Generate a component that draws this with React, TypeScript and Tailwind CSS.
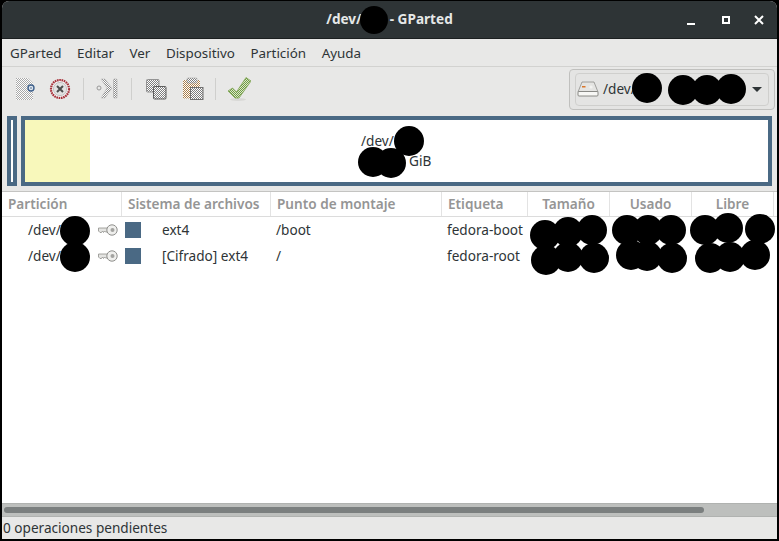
const blobs = [
  [374, 20, 14],
  [647, 88, 15],
  [683, 90, 15],
  [707, 90, 15],
  [731, 89, 15],
  [409, 141, 15],
  [373, 162, 15],
  [391, 163, 15],
  [75, 231, 15],
  [75, 257, 15],
  [545, 235, 15],
  [568, 232, 15],
  [592, 230, 15],
  [546, 260, 15],
  [568, 257, 15],
  [594, 258, 15],
  [627, 230, 15],
  [648, 230, 15],
  [671, 230, 15],
  [631, 255, 15],
  [647, 256, 15],
  [672, 258, 15],
  [705, 230, 15],
  [728, 228, 15],
  [760, 229, 15],
  [710, 258, 15],
  [730, 257, 15],
  [755, 255, 15],
];

const columns = "grid grid-cols-[120px_149px_171px_86px_82px_82px_82px_1fr]";

function Checker({ id, color, base = "#fff" }: { id: string; color: string; base?: string }) {
  return (
    <pattern id={id} width="2" height="2" patternUnits="userSpaceOnUse">
      <rect width="2" height="2" fill={base} />
      <rect width="1" height="1" fill={color} />
      <rect x="1" y="1" width="1" height="1" fill={color} />
    </pattern>
  );
}

function NewIcon() {
  return (
    <svg width="24" height="24" viewBox="0 0 24 24">
      <defs>
        <Checker id="chk-new" color="#a8a8a8" />
      </defs>
      <path d="M3 1H15L20 6V23H3Z" fill="url(#chk-new)" />
      <circle cx="18" cy="11" r="3" fill="#dfe6ee" stroke="#3f618c" strokeWidth="1.4" />
      <circle cx="18" cy="11" r="0.8" fill="#3f618c" />
    </svg>
  );
}

function CancelIcon() {
  return (
    <svg width="24" height="24" viewBox="0 0 24 24">
      <circle cx="12" cy="12" r="9" fill="#f3f3f3" stroke="#a62f38" strokeWidth="2.2" strokeDasharray="1.6 0.7" />
      <circle cx="12" cy="12" r="6.6" fill="#e2e2e2" stroke="#c4c4c4" />
      <path d="M9 9L15 15M15 9L9 15" stroke="#4d4d4d" strokeWidth="2" />
    </svg>
  );
}

function ApplyAllIcon() {
  return (
    <svg width="24" height="24" viewBox="0 0 24 24">
      <defs>
        <Checker id="chk-next" color="#8c8c8c" />
      </defs>
      <circle cx="3" cy="11" r="2" fill="none" stroke="#999" />
      <path d="M5 2H9L16 11L9 21H5L11 11Z" fill="url(#chk-next)" stroke="#bdbdbd" strokeWidth="0.6" />
      <rect x="17.5" y="2" width="3.5" height="19" rx="1" fill="url(#chk-next)" stroke="#aaa" strokeWidth="0.6" />
    </svg>
  );
}

function CopyIcon() {
  return (
    <svg width="24" height="24" viewBox="0 0 24 24">
      <defs>
        <Checker id="chk-copy" color="#7e7e7e" />
      </defs>
      <rect x="2.5" y="2.5" width="12.5" height="12.5" rx="1" fill="url(#chk-copy)" stroke="#949494" />
      <rect x="9.5" y="9.5" width="12.5" height="12.5" rx="1" fill="url(#chk-copy)" stroke="#5e5e5e" />
    </svg>
  );
}

function PasteIcon() {
  return (
    <svg width="24" height="24" viewBox="0 0 24 24">
      <defs>
        <Checker id="chk-board" color="#ab7f4b" />
        <Checker id="chk-sheet" color="#7e7e7e" />
      </defs>
      <rect x="2" y="3" width="17" height="18.5" rx="1" fill="url(#chk-board)" />
      <rect x="6" y="1" width="10" height="5" rx="1" fill="url(#chk-sheet)" stroke="#a5a5a5" strokeWidth="0.6" />
      <rect x="9.5" y="10.5" width="12.5" height="12" fill="url(#chk-sheet)" stroke="#707070" />
    </svg>
  );
}

function CheckIcon() {
  return (
    <svg width="24" height="24" viewBox="0 0 24 24">
      <defs>
        <Checker id="chk-ok" color="#6f9a45" base="#dbe8c8" />
      </defs>
      <ellipse cx="11" cy="22.5" rx="8" ry="1.4" fill="#d8d8d6" />
      <path d="M1 14L5.5 11L9.5 15L19 0.5L24 4L12 21H8Z" fill="url(#chk-ok)" stroke="#7da352" strokeWidth="0.8" />
    </svg>
  );
}

function KeyIcon() {
  return (
    <svg width="20" height="14" viewBox="0 0 20 14">
      <path d="M0.5 5H10V9H7.5L6.5 8L5.5 9.5L4.5 8L3.5 9.5H2L0.5 8Z" fill="#e4e4e2" stroke="#8f8f8c" strokeWidth="0.8" />
      <circle cx="14" cy="7" r="5.2" fill="#efefed" stroke="#8f8f8c" />
      <circle cx="14.5" cy="7" r="2" fill="#a3a3a0" />
    </svg>
  );
}

function DiskIcon() {
  return (
    <svg width="22" height="16" viewBox="0 0 22 16">
      <path d="M5 1H17L21 11H1Z" fill="#e4e4e2" stroke="#8d8d8a" strokeWidth="0.8" />
      <rect x="1" y="10.5" width="20" height="4.5" rx="1" fill="#f7f7f5" stroke="#7f7f7c" strokeWidth="0.9" />
      <rect x="5" y="5" width="3.5" height="1.5" fill="#d9762b" />
      <circle cx="14" cy="6" r="1.6" fill="#f3f3f1" />
    </svg>
  );
}

function Separator() {
  return <div className="ml-[11px] mr-[12px] h-[22px] w-px bg-[#cfcfcd]" />;
}

function HeaderCell({ label, center }: { label: string; center?: boolean }) {
  return (
    <div
      className={`flex items-center border-r border-[#e3e3e3] px-[6px] text-[13.6px] font-semibold text-[#959595] ${center ? "justify-center" : ""}`}
    >
      {label}
    </div>
  );
}

function Row({ fs, mount, label }: { fs: string; mount: string; label: string }) {
  return (
    <div className={`${columns} h-[26px] items-center text-[13.6px] text-[#2e3436]`}>
      <div className="flex items-center pl-[26px]">
        <span className="w-[70px]">/dev/</span>
        <KeyIcon />
      </div>
      <div className="flex items-center pl-[3px]">
        <div className="h-4 w-4 bg-[#4a6984]" />
        <span className="ml-[21px]">{fs}</span>
      </div>
      <div className="pl-[5px]">{mount}</div>
      <div className="pl-[5px]">{label}</div>
    </div>
  );
}

export default function App() {
  return (
    <div className="relative h-[541px] w-[779px] overflow-hidden bg-black font-['Noto_Sans',sans-serif]">
      <div className="mx-[2px] mt-px flex h-[538px] flex-col overflow-hidden rounded-t-[7px] bg-[#e8e8e7]">
        <div className="relative flex h-[38px] shrink-0 items-center justify-center border-b border-[#1c2021] bg-[#2e3436] text-[13.6px] font-bold text-[#e6e8e8]">
          <span>/dev/</span>
          <span className="w-[28px]" />
          <span>- GParted</span>
          <div className="absolute right-[1px] top-0 flex h-full items-center">
            <div className="mr-[27px] mt-[8px] h-[2px] w-[8px] bg-white" />
            <div className="mr-[24px] h-[8px] w-[8px] border-2 border-white" />
            <svg width="10" height="10" viewBox="0 0 10 10" className="mr-[12px]">
              <path d="M1 1L9 9M9 1L1 9" stroke="#fff" strokeWidth="2" />
            </svg>
          </div>
        </div>

        <div className="flex h-[28px] shrink-0 items-center gap-[15.5px] border-b border-[#d2d2d0] pl-2 pt-px text-[13.4px] text-[#2e3436]">
          <span>GParted</span>
          <span>Editar</span>
          <span>Ver</span>
          <span>Dispositivo</span>
          <span>Partición</span>
          <span>Ayuda</span>
        </div>

        <div className="flex h-[44px] shrink-0 items-center pl-[11px] pr-[2px]">
          <NewIcon />
          <div className="ml-[11px]">
            <CancelIcon />
          </div>
          <Separator />
          <ApplyAllIcon />
          <Separator />
          <CopyIcon />
          <div className="ml-[13px]">
            <PasteIcon />
          </div>
          <div className="ml-[10px] mr-[11px] h-[22px] w-px bg-[#cfcfcd]" />
          <CheckIcon />
          <div className="ml-auto flex h-[41px] w-[206px] items-center rounded-[4px] border border-[#c0c0be] bg-[#e4e4e3] px-[5px] py-[3px]">
            <div className="flex h-full w-full items-center rounded-sm border border-[#cfcfcd] pl-[1px] text-[13.6px] text-[#2e3436]">
              <DiskIcon />
              <span className="ml-[4px]">/dev/</span>
              <div className="ml-auto mr-[6px] h-0 w-0 border-x-[5px] border-t-[5px] border-x-transparent border-t-[#2e3436]" />
            </div>
          </div>
        </div>

        <div className="mt-[5px] flex h-[70px] shrink-0 gap-[4px] px-[5px]">
          <div className="w-[10px] border-4 border-[#4a6984] bg-white" />
          <div className="flex flex-1 border-4 border-[#4a6984] bg-white">
            <div className="w-[65px] bg-[#f8f8bb]" />
            <div className="flex flex-1 flex-col items-center justify-center pr-[70px] text-[13.6px] leading-[20px] text-[#2e3436]">
              <span className="w-[70px] pl-[2px]">/dev/</span>
              <span className="w-[70px] pl-[50px]">GiB</span>
            </div>
          </div>
        </div>

        <div className="mt-[5px] flex min-h-0 flex-1 flex-col border-t border-[#c4c4c2] bg-white">
          <div className={`${columns} h-[25px] shrink-0 border-b border-[#dcdcdc]`}>
            <HeaderCell label="Partición" />
            <HeaderCell label="Sistema de archivos" />
            <HeaderCell label="Punto de montaje" />
            <HeaderCell label="Etiqueta" />
            <HeaderCell label="Tamaño" center />
            <HeaderCell label="Usado" center />
            <HeaderCell label="Libre" center />
            <div />
          </div>
          <Row fs="ext4" mount="/boot" label="fedora-boot" />
          <Row fs="[Cifrado] ext4" mount="/" label="fedora-root" />
          <div className="flex-1" />
          <div className="flex h-[14px] shrink-0 items-center border-y border-[#b0b2b0] bg-[#bdbfbd] px-[2px]">
            <div className="h-[6px] w-[700px] rounded-full bg-[#7b7f7f]" />
          </div>
        </div>

        <div className="flex h-[22px] shrink-0 items-center pl-px text-[13.6px] text-[#2e3436]">0 operaciones pendientes</div>
      </div>

      {blobs.map(([x, y, r], i) => (
        <div
          key={i}
          className="absolute rounded-full bg-black"
          style={{ left: x - r, top: y - r, width: r * 2, height: r * 2 }}
        />
      ))}
    </div>
  );
}
